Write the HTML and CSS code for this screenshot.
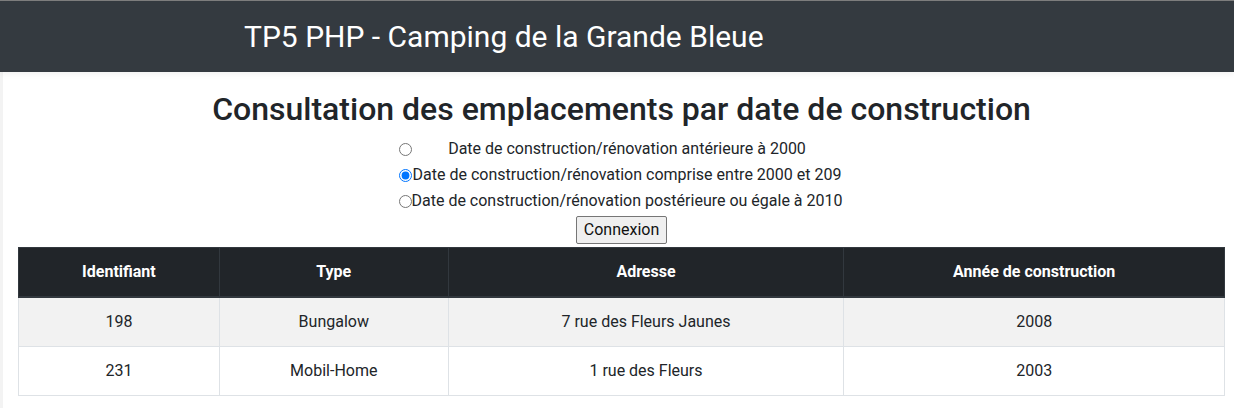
FILE: index.html
```html
<!DOCTYPE html>
<html lang="fr">
<head>
<meta charset="utf-8">
<title>TP5 PHP - Camping de la Grande Bleue</title>
<link rel="stylesheet" href="styles.css">
</head>
<body>
<header class="topbar">
  <h1 class="brand">TP5 PHP - Camping de la Grande Bleue</h1>
</header>
<main class="page">
  <h2 class="title">Consultation des emplacements par date de construction</h2>
  <form class="filter">
    <div class="choices">
      <input type="radio" name="periode" id="p1" class="radio">
      <label for="p1" class="choice">Date de construction/rénovation antérieure à 2000</label>
      <input type="radio" name="periode" id="p2" class="radio" checked>
      <label for="p2" class="choice">Date de construction/rénovation comprise entre 2000 et 209</label>
      <input type="radio" name="periode" id="p3" class="radio">
      <label for="p3" class="choice">Date de construction/rénovation postérieure ou égale à 2010</label>
    </div>
    <button type="button" class="btn">Connexion</button>
  </form>
  <table class="grid">
    <colgroup>
      <col class="c1"><col class="c2"><col class="c3"><col class="c4">
    </colgroup>
    <thead>
      <tr><th>Identifiant</th><th>Type</th><th>Adresse</th><th>Année de construction</th></tr>
    </thead>
    <tbody>
      <tr class="odd"><td>198</td><td>Bungalow</td><td>7 rue des Fleurs Jaunes</td><td>2008</td></tr>
      <tr><td>231</td><td>Mobil-Home</td><td>1 rue des Fleurs</td><td>2003</td></tr>
    </tbody>
  </table>
</main>
</body>
</html>
```
FILE: styles.css
```css
html, body {
  margin: 0;
  padding: 0;
  background: #ffffff;
}
body {
  font-family: Roboto, "Liberation Sans", sans-serif;
  font-size: 16px;
  line-height: 1.5;
  color: #212529;
}
.topbar {
  height: 71px;
  border-top: 1px solid #7d7d7d;
  background: #343a40;
  display: flex;
  align-items: center;
  box-shadow: 0 2px 6px rgba(0, 0, 0, 0.06);
  position: relative;
  z-index: 1;
}
.brand {
  margin: 0 0 0 244px;
  font-size: 30px;
  font-weight: 400;
  line-height: 1.2;
  color: #ffffff;
}
.page {
  border-left: 3px solid #f3f3f3;
  padding: 18px 9px 12px 15px;
}
.title {
  margin: 0 0 8px;
  font-size: 32px;
  font-weight: 500;
  line-height: 1.2;
  text-align: center;
}
.filter {
  display: flex;
  flex-direction: column;
  align-items: center;
}
.choices {
  display: grid;
  grid-template-columns: auto auto;
  grid-auto-rows: 26px;
  align-items: center;
  margin-left: -2px;
}
.radio {
  width: 13px;
  height: 13px;
  margin: 0;
}
.choice {
  text-align: center;
  padding: 0;
}
.btn {
  margin-top: 2px;
  font-family: Roboto, "Liberation Sans", sans-serif;
  font-size: 16px;
  line-height: 20px;
  padding: 3px 7px;
  color: #111;
  background: #efefef;
  border: 1px solid #767676;
  border-radius: 2px;
}
.grid {
  margin-top: 3px;
  width: 100%;
  border-collapse: collapse;
  text-align: center;
}
.c1 { width: 201px; }
.c2 { width: 229px; }
.c3 { width: 396px; }
.c4 { width: 381px; }
.grid th, .grid td {
  padding: 12px;
  border: 1px solid #dee2e6;
  line-height: 24px;
}
.grid th {
  background: #212529;
  color: #ffffff;
  font-weight: 700;
  border-color: #32383e;
  border-bottom: 2px solid #32383e;
}
.grid tr.odd td {
  background: #f2f2f2;
}
```
